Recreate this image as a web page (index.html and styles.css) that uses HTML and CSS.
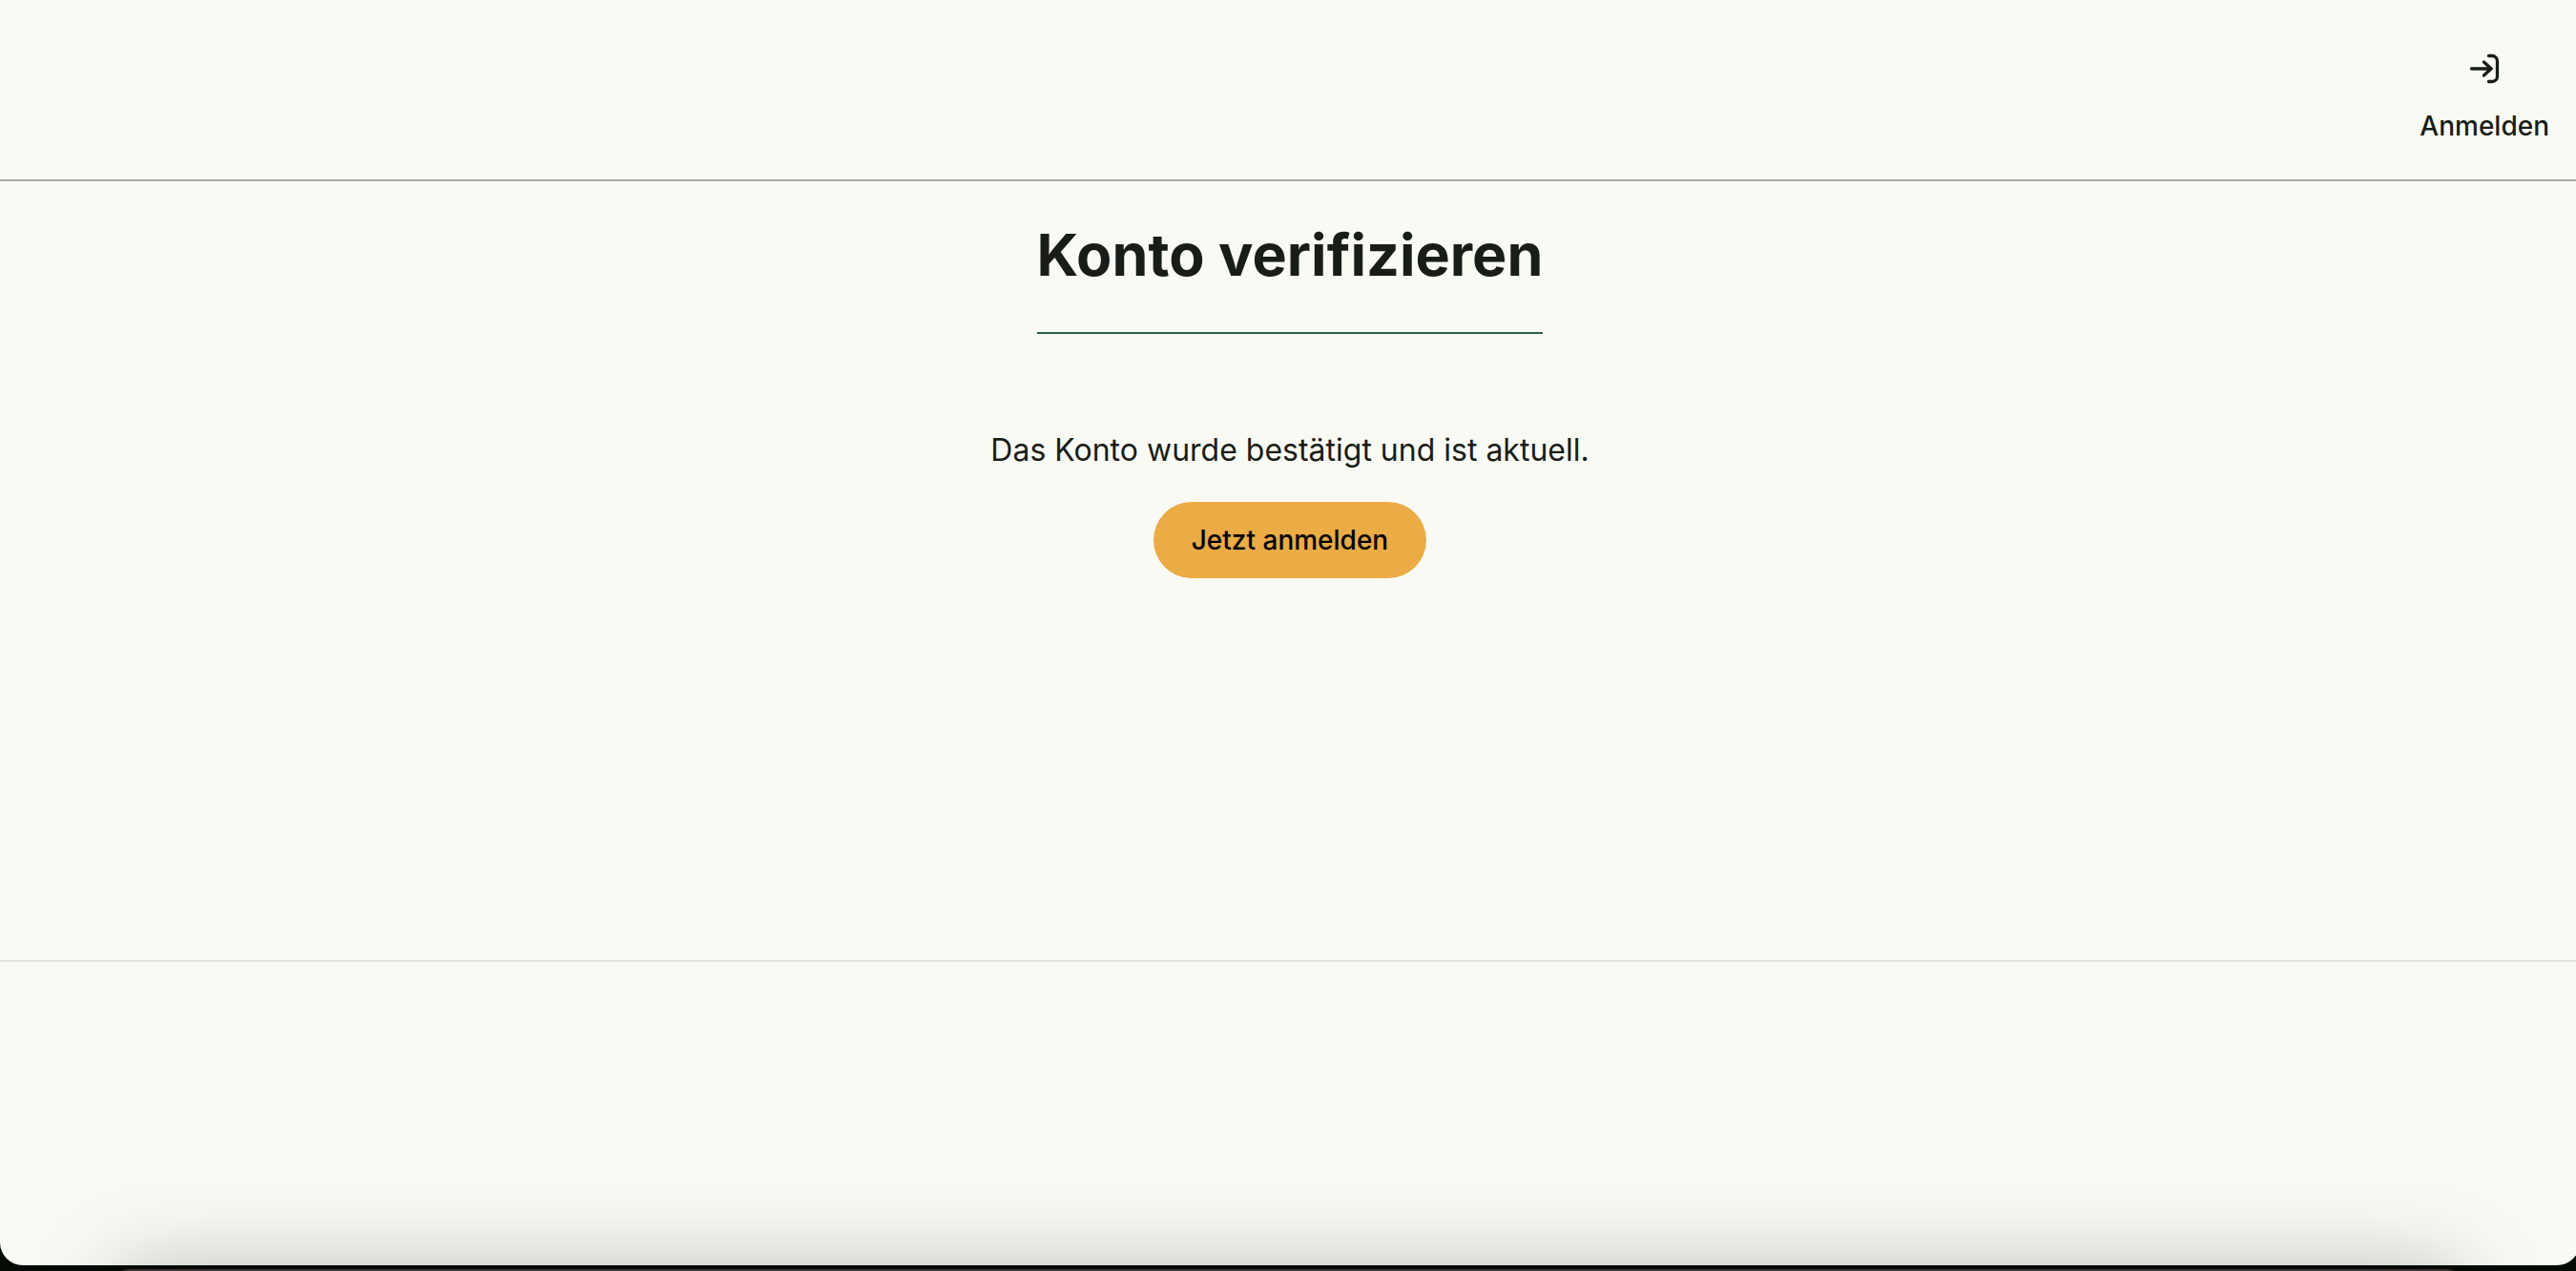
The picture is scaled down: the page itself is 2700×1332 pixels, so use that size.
FILE: index.html
```html
<!DOCTYPE html>
<html lang="de">
<head>
<meta charset="utf-8">
<meta name="viewport" content="width=device-width, initial-scale=1">
<title>Konto verifizieren</title>
<link rel="stylesheet" href="styles.css">
</head>
<body>
<div class="desktop">
  <div class="window">
    <header class="header">
      <a class="login" href="#anmelden">
        <svg class="login-icon" viewBox="0 0 40 40" aria-hidden="true">
          <path d="M6.500 20H27"/>
          <path d="M19.500 13L27 20L19.500 27"/>
          <path d="M24.500 6.500H28A5.500 5.500 0 0 1 33.500 12V28A5.500 5.500 0 0 1 28 33.500H24.500"/>
        </svg>
        <span>Anmelden</span>
      </a>
    </header>
    <main class="main">
      <h1 class="title">Konto verifizieren</h1>
      <p class="message">Das Konto wurde bestätigt und ist aktuell.</p>
      <button class="button" type="button">Jetzt anmelden</button>
    </main>
    <footer class="footer"></footer>
  </div>
  <div class="backdrop"></div>
</div>
</body>
</html>
```
FILE: styles.css
```css
* {
  box-sizing: border-box;
}

body {
  margin: 0;
  background: #050a05;
  color: #191d17;
  font-family: Inter, "Liberation Sans", sans-serif;
}

.desktop {
  display: flex;
  flex-direction: column;
  min-height: 100vh;
  overflow: hidden;
}

/* The window runs slightly past the right edge of the desktop. */
.window {
  display: flex;
  flex: 1;
  flex-direction: column;
  margin: 0 -4px 4px 0;
  background: #f9faf4;
  border-radius: 0 0 24px 24px;
}

.header {
  display: flex;
  justify-content: flex-end;
  padding: 52px 32px 38px;
  border-bottom: 2px solid #a5aaa3;
}

.login {
  display: flex;
  flex-direction: column;
  align-items: center;
  gap: 22px;
  color: inherit;
  font-size: 28px;
  font-weight: 500;
  line-height: 36px;
  text-decoration: none;
}

.login-icon {
  width: 40px;
  height: 40px;
  fill: none;
  stroke: currentColor;
  stroke-width: 3.3;
  stroke-linecap: round;
  stroke-linejoin: round;
}

.main {
  display: flex;
  flex: 1;
  flex-direction: column;
  align-items: center;
  padding: 36px 32px;
}

.title {
  margin: 0;
  padding-bottom: 40px;
  border-bottom: 2px solid #2c6149;
  font-size: 61px;
  font-weight: 700;
  line-height: 82px;
}

.message {
  margin: 98px 0 30px;
  font-size: 32px;
  line-height: 48px;
}

.button {
  padding: 20px 40px;
  border: 0;
  border-radius: 40px;
  background: #ebab45;
  color: #000;
  font: inherit;
  font-size: 28px;
  font-weight: 500;
  line-height: 40px;
}

.footer {
  min-height: 320px;
  border-top: 2px solid #e2e4dc;
}

/* Only the top edge shows; the rest is clipped by the desktop. */
.backdrop {
  height: 200px;
  margin: 0 120px -198px;
  background: #383434;
  border-radius: 16px;
  box-shadow: 0 0 90px rgba(0, 0, 0, 0.25);
}
```
